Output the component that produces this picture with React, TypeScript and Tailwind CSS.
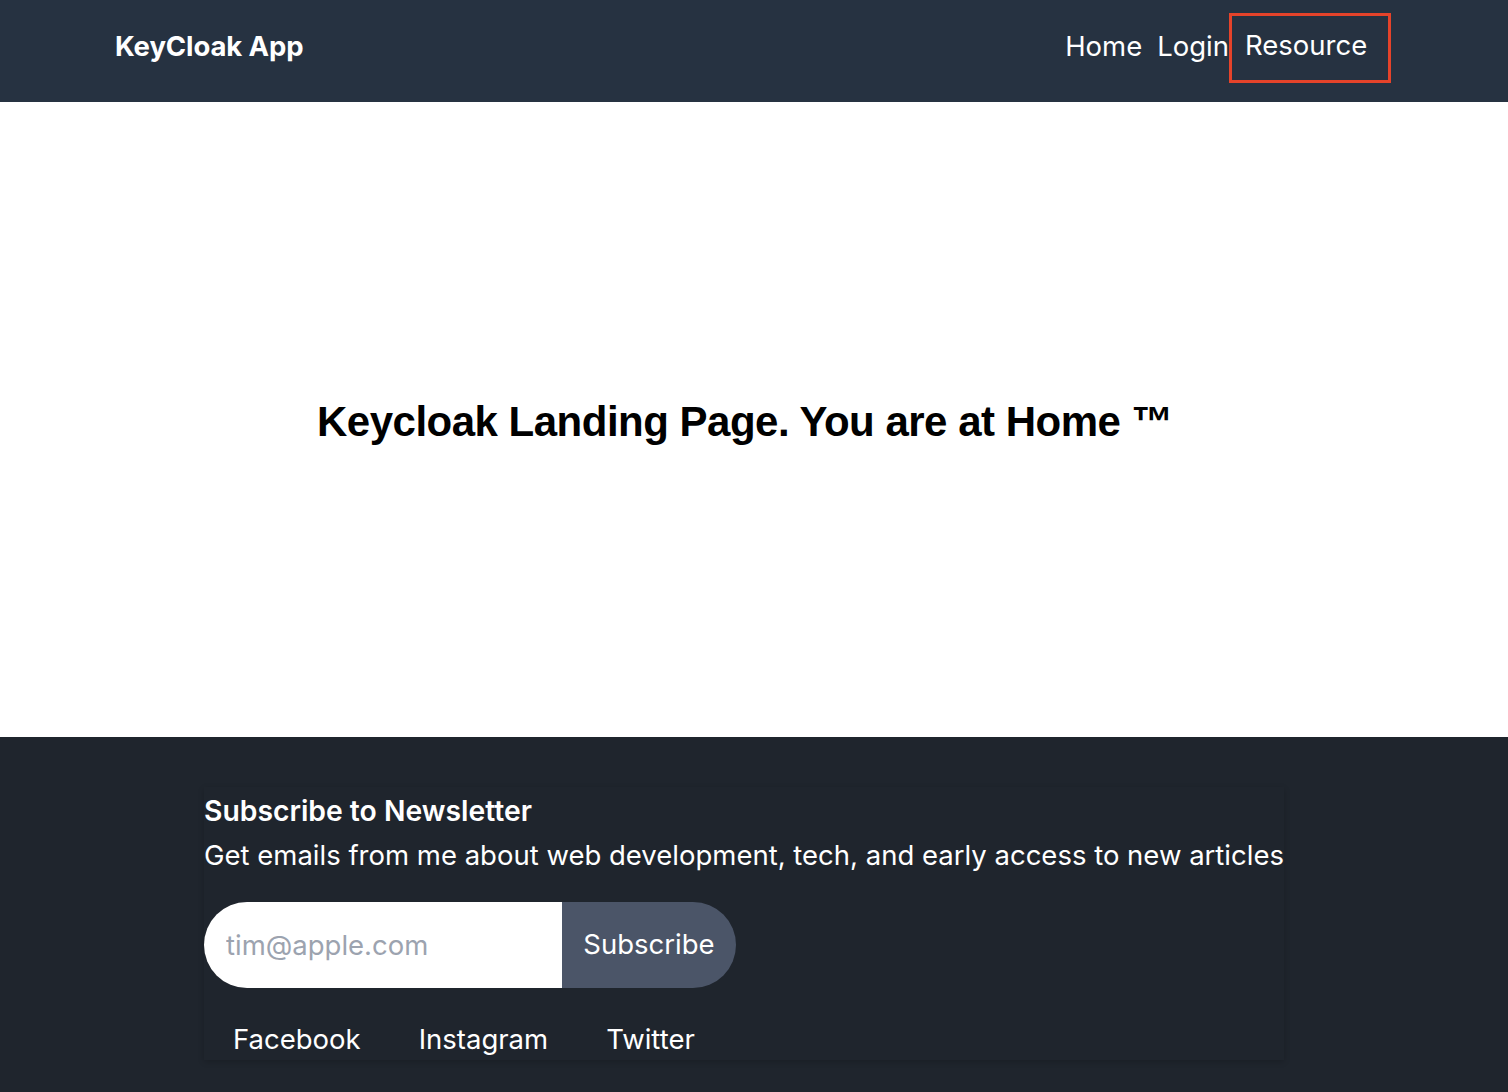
import React from "react";

const NavBar = () => {
  return (
    <nav className="h-[102px] bg-[#263241] flex items-center justify-between pl-[115px] pr-[117px] pb-[8px]">
      <div className="text-white font-bold text-[27.5px] tracking-[-0.1px]">KeyCloak App</div>
      <div className="flex items-center text-white text-[27.5px]">
        <a className="pr-[15px]">Home</a>
        <a>Login</a>
        <a className="border-[3px] border-[#e5432a] h-[70px] w-[162px] flex items-center pl-[13px] pb-[4px] mt-[2px]">
          Resource
        </a>
      </div>
    </nav>
  );
};

const Footer = () => {
  return (
    <footer className="bg-[#1f252d] h-[355px] flex pl-[204px] pt-[50px]">
      <div className="w-[1080px] shadow-[0_2px_6px_rgba(0,0,0,0.18)] h-[273px] pt-[6px]">
        <h3 className="text-white font-semibold text-[28.3px] leading-[36px]">Subscribe to Newsletter</h3>
        <p className="text-white text-[27.5px] leading-[36px] mt-[8px] whitespace-nowrap">
          Get emails from me about web development, tech, and early access to new articles
        </p>
        <div className="flex mt-[29px]">
          <input
            className="w-[358px] h-[86px] bg-white rounded-l-full pl-[22px] text-[27.5px] text-gray-700 placeholder-[#9ca3af] outline-none"
            placeholder="tim@apple.com"
          />
          <button className="w-[174px] h-[86px] bg-[#4b5568] text-white text-[27.5px] rounded-r-full">
            Subscribe
          </button>
        </div>
        <div className="flex text-white text-[27.5px] mt-[31px] pl-[29px] gap-[58px]">
          <a>Facebook</a>
          <a>Instagram</a>
          <a>Twitter</a>
        </div>
      </div>
    </footer>
  );
};

export default function App() {
  return (
    <div className="min-h-screen flex flex-col font-['Inter',sans-serif]">
      <NavBar />
      <main className="h-[635px] bg-white flex items-center justify-center pr-[18px] pt-[4px]">
        <h1 className="text-[42px] font-bold text-black font-['Liberation_Sans',Arial,sans-serif] tracking-[-0.5px]">
          Keycloak Landing Page. You are at Home ™
        </h1>
      </main>
      <Footer />
    </div>
  );
}
